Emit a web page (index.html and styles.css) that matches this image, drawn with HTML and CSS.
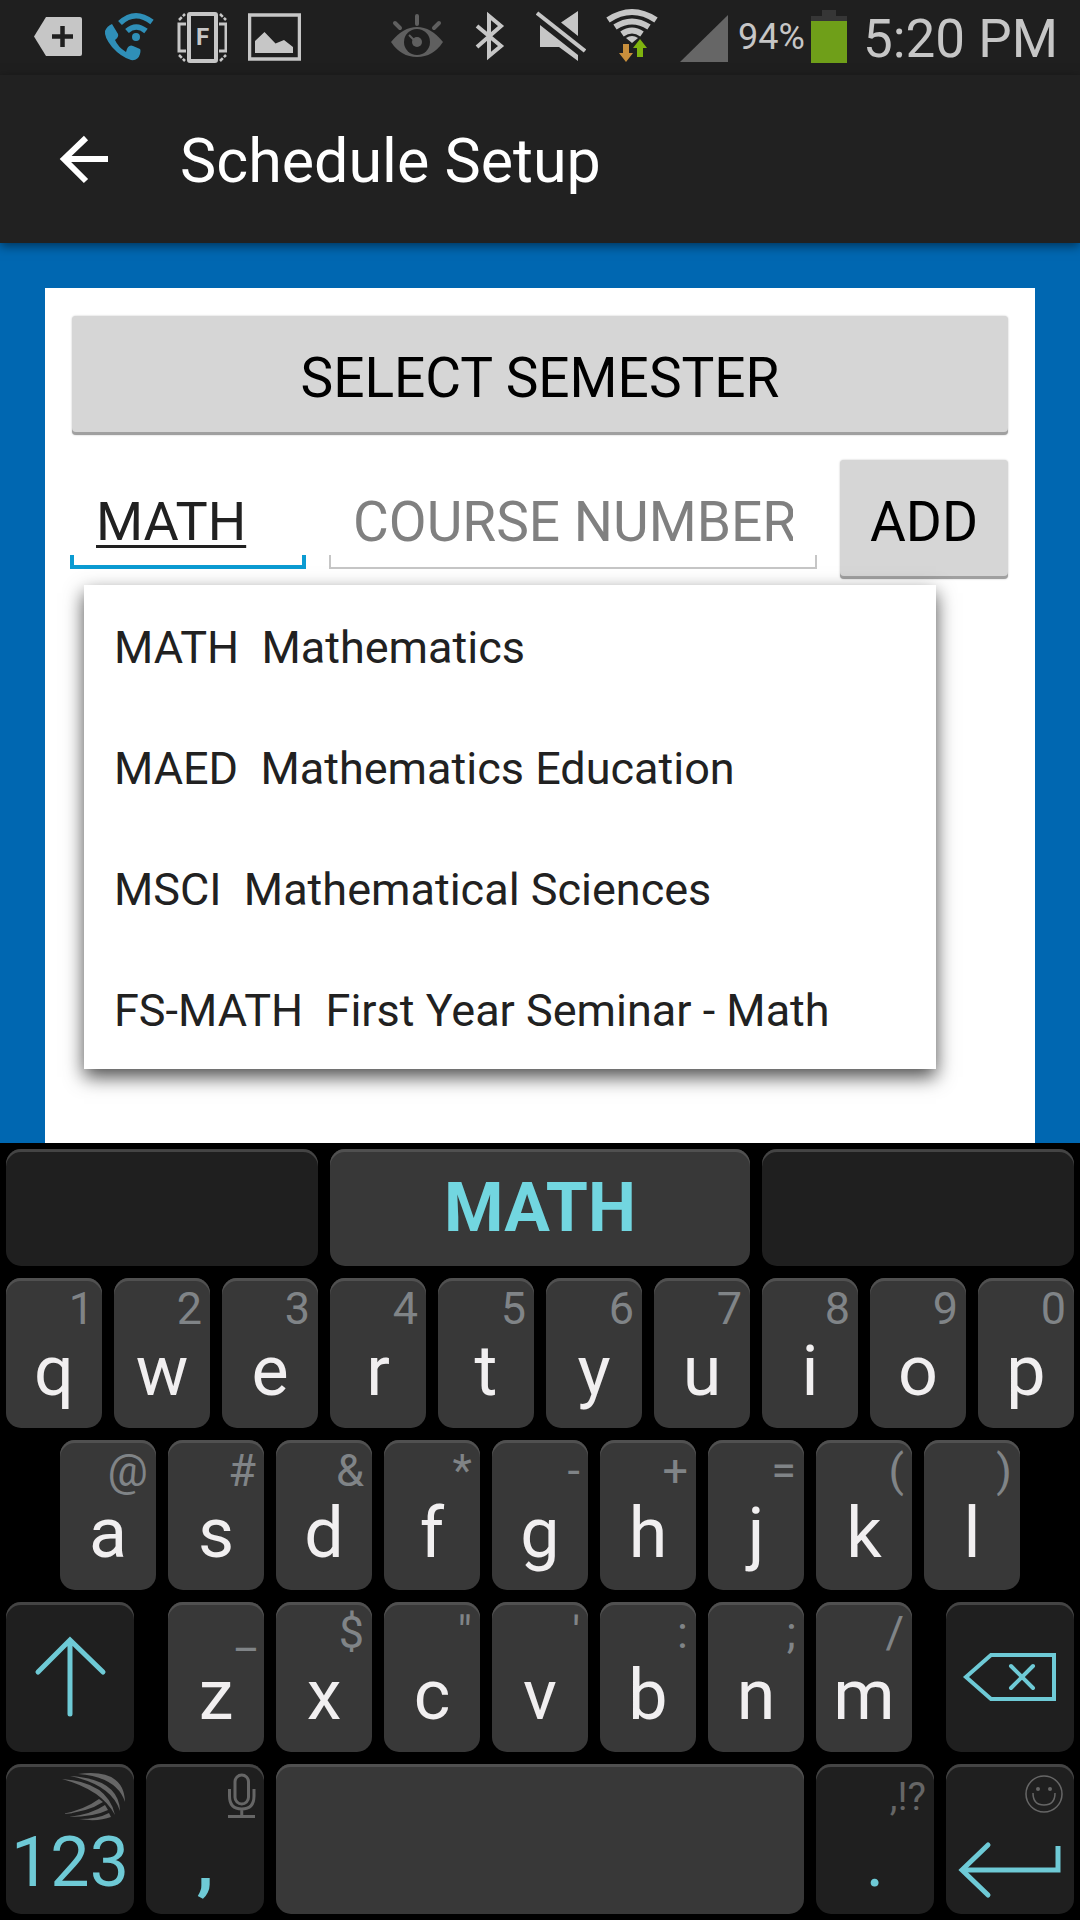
FILE: index.html
```html
<!DOCTYPE html>
<html lang="en">
<head>
<meta charset="utf-8">
<meta name="viewport" content="width=device-width, initial-scale=1">
<title>Schedule Setup</title>
<link rel="stylesheet" href="styles.css">
</head>
<body>
<div class="status">
  <div class="status-left">
    <svg width="49" height="75" viewBox="34 0 49 75"><path d="M46 17H80Q82 17 82 19V54Q82 56 80 56H46L34 36.500Z" fill="#c6c6c6"/><path d="M52 36.500H73M62.500 26V47" stroke="#1f1f1f" stroke-width="4.500"/></svg>
    <svg width="50" height="75" viewBox="104 0 50 75"><g fill="#2f8fb8"><circle cx="136" cy="37" r="4"/><path d="M112 24L118 34Q119 37 115 40Q118 47 126 52Q128 44 133 46L140 49Q141 50 140 54Q138 61 131 60Q121 57 112 47Q104 37 105 31Q107 26 112 24Z"/></g><g fill="none" stroke="#2f8fb8" stroke-width="5.500"><path d="M120 23Q135 9 152 22"/><path d="M127 31Q136 23 146 31"/></g></svg>
    <svg width="52" height="75" viewBox="175 0 52 75"><g fill="none" stroke="#c6c6c6"><rect x="189" y="14" width="27" height="47" rx="1" stroke-width="4"/><path d="M186 24H179V51H186M219 24H226V51H219" stroke-width="3"/><path d="M179 20L185 14M179 55L185 61M220 14L226 20M220 61L226 55" stroke-width="2.500" stroke-dasharray="4 1.500"/></g><text x="202.500" y="45" text-anchor="middle" class="icon-letter">F</text></svg>
    <svg width="53" height="75" viewBox="248 0 53 75"><rect x="249.500" y="15" width="50" height="44" fill="none" stroke="#c6c6c6" stroke-width="3.500"/><path d="M255 53V41L264.500 32L275.500 43.500L284 40L293 47V53Z" fill="#c6c6c6"/></svg>
  </div>
  <div class="status-right">
    <svg width="59" height="75" viewBox="391 0 59 75"><path d="M391 42Q403 27 417 27T443 42Q433 57 417 57T391 42Z" fill="#5f5f5f"/><circle cx="417" cy="42" r="13" fill="#1f1f1f"/><circle cx="417" cy="42" r="5" fill="#5f5f5f"/><path d="M409 35L414 40" stroke="#5f5f5f" stroke-width="2"/><path d="M417 16V24M395 23L400 28M439 23L434 28" stroke="#5f5f5f" stroke-width="4" stroke-linecap="round"/></svg>
    <svg width="46" height="75" viewBox="470 0 46 75"><path d="M477 26L501 46L489 56V16L501 26L477 47" fill="none" stroke="#c6c6c6" stroke-width="4"/></svg>
    <svg width="50" height="75" viewBox="536 0 50 75"><path d="M561 22.500L578 11V36ZM540 25L578 55V61L559 47H540Z" fill="#c6c6c6"/><path d="M538 16L583 54" stroke="#1f1f1f" stroke-width="5"/><path d="M537 13L585 51" stroke="#c6c6c6" stroke-width="4"/></svg>
    <svg width="54" height="75" viewBox="606 0 54 75"><g fill="none" stroke="#c6c6c6" stroke-width="6"><path d="M608 20Q632 4 656 20"/><path d="M615 27Q632 16 649 27"/><path d="M622 34Q632 27 642 34"/></g><path d="M626 38Q632 34 638 38L632 43Z" fill="#c6c6c6"/><path d="M623 44H629V53H633L626 62L619 53H623Z" fill="#c98f3c"/><path d="M637 57H643V48H647L640 39L633 48H637Z" fill="#7fb30f"/></svg>
    <svg width="48" height="75" viewBox="680 0 48 75"><path d="M680 62L728 15V62Z" fill="#666"/></svg>
    <span class="percent">94%</span>
    <svg class="battery" width="36" height="75" viewBox="810 0 36 75"><path d="M821 10H835V16H846V21H810V16H821Z" fill="#363636"/><path d="M810 21H846V63H810Z" fill="#6f9f19"/></svg>
    <time class="clock">5:20 PM</time>
  </div>
</div>
<header class="appbar">
  <a class="back" href="#" aria-label="Back"><svg width="50" height="50" viewBox="59 134 50 50"><path d="M86 138L64 159L86 181M63 159H108" fill="none" stroke="#fff" stroke-width="6"/></svg></a>
  <h1 class="title">Schedule Setup</h1>
</header>
<main class="content">
  <form class="card">
    <button type="button" class="btn">SELECT SEMESTER</button>
    <div class="course">
      <input class="field field-active" type="text" aria-label="Subject" value="MATH">
      <input class="field" type="text" aria-label="Course number" placeholder="COURSE NUMBER">
      <button type="button" class="btn">ADD</button>
    </div>
    <ul class="suggestions">
      <li>MATH  Mathematics</li>
      <li>MAED  Mathematics Education</li>
      <li>MSCI  Mathematical Sciences</li>
      <li>FS-MATH  First Year Seminar - Math</li>
    </ul>
  </form>
</main>
<section class="keyboard" aria-label="Keyboard">
  <div class="row row-predict">
    <button class="key key-dark" aria-label="Prediction 1"></button>
    <button class="key prediction">MATH</button>
    <button class="key key-dark" aria-label="Prediction 3"></button>
  </div>
  <div class="row row-top">
    <button class="key"><span class="hint">1</span><span class="letter">q</span></button>
    <button class="key"><span class="hint">2</span><span class="letter">w</span></button>
    <button class="key"><span class="hint">3</span><span class="letter">e</span></button>
    <button class="key"><span class="hint">4</span><span class="letter">r</span></button>
    <button class="key"><span class="hint">5</span><span class="letter">t</span></button>
    <button class="key"><span class="hint">6</span><span class="letter">y</span></button>
    <button class="key"><span class="hint">7</span><span class="letter">u</span></button>
    <button class="key"><span class="hint">8</span><span class="letter">i</span></button>
    <button class="key"><span class="hint">9</span><span class="letter">o</span></button>
    <button class="key"><span class="hint">0</span><span class="letter">p</span></button>
  </div>
  <div class="row row-home">
    <button class="key first"><span class="hint">@</span><span class="letter">a</span></button>
    <button class="key"><span class="hint">#</span><span class="letter">s</span></button>
    <button class="key"><span class="hint">&amp;</span><span class="letter">d</span></button>
    <button class="key"><span class="hint">*</span><span class="letter">f</span></button>
    <button class="key"><span class="hint">-</span><span class="letter">g</span></button>
    <button class="key"><span class="hint">+</span><span class="letter">h</span></button>
    <button class="key"><span class="hint">=</span><span class="letter">j</span></button>
    <button class="key"><span class="hint">(</span><span class="letter">k</span></button>
    <button class="key"><span class="hint">)</span><span class="letter">l</span></button>
  </div>
  <div class="row row-bottom">
    <button class="key key-dark key-icon" aria-label="Shift"><svg width="128" height="150" viewBox="0 0 128 150"><path d="M32 70L64 38L97 70M64 39V112" class="accent-line" stroke-linecap="round"/></svg></button>
    <button class="key after-gap"><span class="hint">_</span><span class="letter">z</span></button>
    <button class="key"><span class="hint">$</span><span class="letter">x</span></button>
    <button class="key"><span class="hint">"</span><span class="letter">c</span></button>
    <button class="key"><span class="hint">'</span><span class="letter">v</span></button>
    <button class="key"><span class="hint">:</span><span class="letter">b</span></button>
    <button class="key"><span class="hint">;</span><span class="letter">n</span></button>
    <button class="key"><span class="hint">/</span><span class="letter">m</span></button>
    <button class="key key-dark key-icon last" aria-label="Backspace"><svg width="128" height="150" viewBox="0 0 128 150"><path d="M20 75L45 53H108V97H45Z" class="accent-line thin"/><path d="M65 64L87 86M87 64L65 86" class="accent-line thin" stroke-linecap="round"/></svg></button>
  </div>
  <div class="row row-space">
    <button class="key key-dark"><span class="hint"><svg width="64" height="50" viewBox="62 1771 64 50" fill="#666"><path d="M78 1774Q124 1768 125 1802Q117 1777 78 1774Z"/><path d="M70 1776Q119 1779 120 1811Q112 1785 70 1776Z"/><path d="M62 1779Q108 1782 115 1815Q102 1790 62 1779Z"/><path d="M62 1814Q84 1810 99 1799L103 1802Q88 1812 62 1814Z"/><path d="M69 1817Q92 1814 105 1805L108 1810Q94 1817 69 1817Z"/><path d="M79 1819Q98 1819 109 1813L111 1817Q98 1822 79 1819Z"/></svg></span><span class="letter label">123</span></button>
    <button class="key key-dark"><span class="hint"><svg width="28" height="50" viewBox="228 1771 28 50" fill="none" stroke="#666" stroke-width="3"><rect x="235" y="1775" width="13.500" height="29" rx="6.750"/><path d="M229.500 1789V1796Q229.500 1809 241.750 1809T254 1796V1789M241.750 1809V1816M228 1816.500H255"/></svg></span><span class="letter label comma">,</span></button>
    <button class="key" aria-label="Space"></button>
    <button class="key key-dark"><span class="hint marks">,!?</span><span class="letter label">.</span></button>
    <button class="key key-dark key-icon" aria-label="Enter"><svg width="128" height="150" viewBox="0 0 128 150"><g fill="none" stroke="#666" stroke-width="1.500"><circle cx="98" cy="30" r="18"/><path d="M87 29Q87 41 98 41T109 29"/></g><circle cx="92" cy="25" r="2" fill="#666"/><circle cx="104" cy="25" r="2" fill="#666"/><path d="M42 81L16 106L42 131" class="accent-line" stroke-linecap="round"/><path d="M17 106H112V82" class="accent-line"/></svg></button>
  </div>
</section>
</body>
</html>
```
FILE: styles.css
```css
* { box-sizing: border-box; }

body {
  margin: 0;
  min-height: 100vh;
  display: flex;
  flex-direction: column;
  font-family: Roboto, "Liberation Sans", sans-serif;
  background: #0067b1;
}

button, input { font: inherit; border: 0; margin: 0; }
svg { display: block; flex: none; }

/* Status bar */
.status {
  display: flex;
  justify-content: space-between;
  height: 75px;
  padding: 0 22px 0 34px;
  background: #1f1f1f;
  color: #c6c6c6;
}
.status-left { display: flex; gap: 21px; }
.status-right { display: flex; gap: 20px; }
.icon-letter { font-size: 24px; font-weight: 700; fill: #c6c6c6; }
.percent { margin-left: -10px; font-size: 36px; line-height: 75px; }
.battery { margin-left: -14px; }
.clock { font-size: 53px; line-height: 79px; margin-left: -4px; }

/* App bar */
.appbar {
  position: relative;
  display: flex;
  align-items: center;
  gap: 71px;
  height: 168px;
  padding: 0 59px;
  background: #212121;
  color: #fff;
  box-shadow: 0 3px 10px rgba(0, 0, 0, .5);
}
.title { margin: 0; font-size: 61px; font-weight: 400; line-height: 70px; padding-top: 4px; }

/* Form */
.content { flex: 1; display: flex; padding: 45px 45px 0; }
.card {
  position: relative;
  flex: 1;
  display: flex;
  flex-direction: column;
  gap: 25px;
  padding: 28px 27px 0;
  background: #fff;
  font-size: 55px;
}
.btn {
  height: 119px;
  padding: 4px 0 0;
  border-radius: 4px;
  background: #d6d6d6;
  color: #000;
  box-shadow: inset 0 -3px 0 #a0a0a0, 0 0 2px rgba(0, 0, 0, .25);
}
.course {
  display: grid;
  grid-template-columns: 236fr 488fr 168fr;
  gap: 23px;
  margin-left: -2px;
}
.field {
  --line: #c6c6c6;
  --w: 2px;
  min-width: 0;
  width: 100%;
  height: 109px;
  padding: 14px 24px 0;
  border-radius: 0;
  outline: 0;
  color: #212121;
  background:
    linear-gradient(var(--line), var(--line)) 0 100% / 100% var(--w) no-repeat,
    linear-gradient(var(--line), var(--line)) 0 100% / var(--w) 14px no-repeat,
    linear-gradient(var(--line), var(--line)) 100% 100% / var(--w) 14px no-repeat;
}
.field::placeholder { color: #808080; opacity: 1; }
.field-active {
  --line: #0b9bd2;
  --w: 4px;
  padding-left: 26px;
  font-size: 54px;
  text-decoration: underline;
  text-decoration-thickness: 3px;
  text-underline-offset: 5px;
}
.suggestions {
  position: absolute;
  top: 297px;
  left: 39px;
  right: 99px;
  margin: 0;
  padding: 0;
  list-style: none;
  background: #fff;
  color: #212121;
  font-size: 45px;
  box-shadow: 0 8px 18px rgba(0, 0, 0, .7);
}
.suggestions li { padding: 4px 30px 0; line-height: 117px; white-space: pre; }

/* Keyboard */
.keyboard {
  display: flex;
  flex-direction: column;
  gap: 12px;
  padding: 6px;
  background: #000;
}
.row { display: grid; gap: 12px; grid-auto-rows: 150px; }
.row-predict { grid-template-columns: 312fr 420fr 312fr; grid-auto-rows: 117px; }
.row-top { grid-template-columns: repeat(10, 1fr); }
.row-home { grid-template-columns: 42fr repeat(9, 96fr) 42fr; }
.row-bottom { grid-template-columns: 128fr 10fr repeat(7, 96fr) 10fr 128fr; }
.row-space { grid-template-columns: 128fr 118fr 528fr 118fr 128fr; }
.first { grid-column: 2; }
.after-gap { grid-column: 3; }
.last { grid-column: 11; }

.key {
  display: flex;
  flex-direction: column;
  align-items: center;
  justify-content: flex-start;
  min-width: 0;
  padding: 0 8px;
  border-radius: 15px;
  background: #383838;
  color: #f1eff0;
  box-shadow: inset 0 3px 0 #505050;
}
.key-dark { background: #1f1f1f; box-shadow: inset 0 3px 0 #444; }
.key-icon { padding: 0; }
.hint {
  display: flex;
  justify-content: flex-end;
  align-self: stretch;
  height: 61px;
  font-size: 45px;
  line-height: 61px;
  color: #808487;
}
.hint svg { margin-top: 7px; }
.marks { font-size: 39px; line-height: 67px; color: #666; }
.letter { font-size: 70px; line-height: 64px; }
.label { padding-top: 5px; color: #6ecad6; }
.comma { font-size: 70px; font-weight: 700; }
.prediction {
  justify-content: center;
  color: #72d6e0;
  font-size: 68px;
  font-weight: 700;
}
.accent-line { fill: none; stroke: #6ecad6; stroke-width: 5; }
.thin { stroke-width: 4; }
```
